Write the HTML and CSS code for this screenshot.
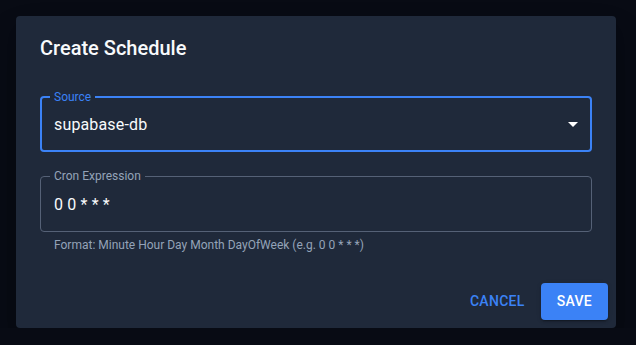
FILE: index.html
```html
<!DOCTYPE html>
<html>
	<head>
		<meta charset="UTF-8">
		<title>Create Schedule</title>
		<link rel="stylesheet" href="styles.css">
	</head>
	<body>
		<div class="dialog">
			<h2 class="dialog_title">Create Schedule</h2>

			<div class="dialog_content">
				<div class="field field_focused">
					<span class="field_label">Source</span>
					<span class="field_value">supabase-db</span>
					<svg class="field_arrow" viewBox="0 0 24 24" width="24" height="24">
						<path d="M7 10l5 5 5-5z" fill="#fff"/>
					</svg>
				</div>

				<div class="field_group">
					<div class="field">
						<span class="field_label">Cron Expression</span>
						<span class="field_value">0 0 * * *</span>
					</div>
					<p class="field_help">Format: Minute Hour Day Month DayOfWeek (e.g. 0 0 * * *)</p>
				</div>
			</div>

			<div class="dialog_actions">
				<button class="btn btn_text">Cancel</button>
				<button class="btn btn_primary">Save</button>
			</div>
		</div>
	</body>
</html>
```

FILE: styles.css
```css
* {
	margin: 0;
	padding: 0;
	box-sizing: border-box;
}

body {
	background-color: #080b14;
	font-family: Roboto, "Noto Sans", sans-serif;
	color: #f1f5f9;
	padding: 16px 20px 0 16px;
}

.dialog {
	width: 600px;
	background-color: #1f293a;
	border-radius: 4px;
	box-shadow: 0 11px 15px -7px rgba(0,0,0,.2), 0 24px 38px 3px rgba(0,0,0,.14);
}

.dialog_title {
	font-size: 20px;
	font-weight: 500;
	line-height: 32px;
	padding: 16px 24px;
	color: #f8fafc;
}

.dialog_content {
	padding: 16px 24px 20px;
	display: flex;
	flex-direction: column;
	gap: 24px;
}

/* outlined text field */
.field {
	position: relative;
	height: 56px;
	border: 1px solid #556176;
	border-radius: 4px;
	padding: 0 13px;
	display: flex;
	align-items: center;
}
.field_focused {
	border: 2px solid #3b82f6;
	padding: 0 5px 0 12px;
}

.field_label {
	position: absolute;
	top: -8px;
	left: 9px;
	padding: 0 4px;
	font-size: 12px;
	line-height: 14px;
	color: #94a3b8;
	background-color: #1f293a;
}
.field_focused .field_label {
	left: 8px;
	color: #3b82f6;
}

.field_value {
	font-size: 16px;
	letter-spacing: 0.15px;
	color: #f8fafc;
	flex: 1;
}

.field_arrow {
	display: block;
}

.field_help {
	margin: 3px 14px 0;
	font-size: 12px;
	line-height: 20px;
	color: #94a3b8;
}

.dialog_actions {
	display: flex;
	justify-content: flex-end;
	gap: 8px;
	padding: 8px;
}

.btn {
	font-family: Roboto, "Noto Sans", sans-serif;
	font-size: 14px;
	font-weight: 500;
	letter-spacing: 0.3px;
	text-transform: uppercase;
	line-height: 24px;
	border: none;
	border-radius: 4px;
	height: 36.5px;
	cursor: pointer;
}
.btn_text {
	background: none;
	color: #3b82f6;
	padding: 6px 8px;
}
.btn_primary {
	background-color: #3b82f6;
	color: #fff;
	padding: 6px 16px;
	min-width: 66px;
	box-shadow: 0 3px 1px -2px rgba(0,0,0,.2), 0 2px 2px 0 rgba(0,0,0,.14), 0 1px 5px 0 rgba(0,0,0,.12);
}
```
